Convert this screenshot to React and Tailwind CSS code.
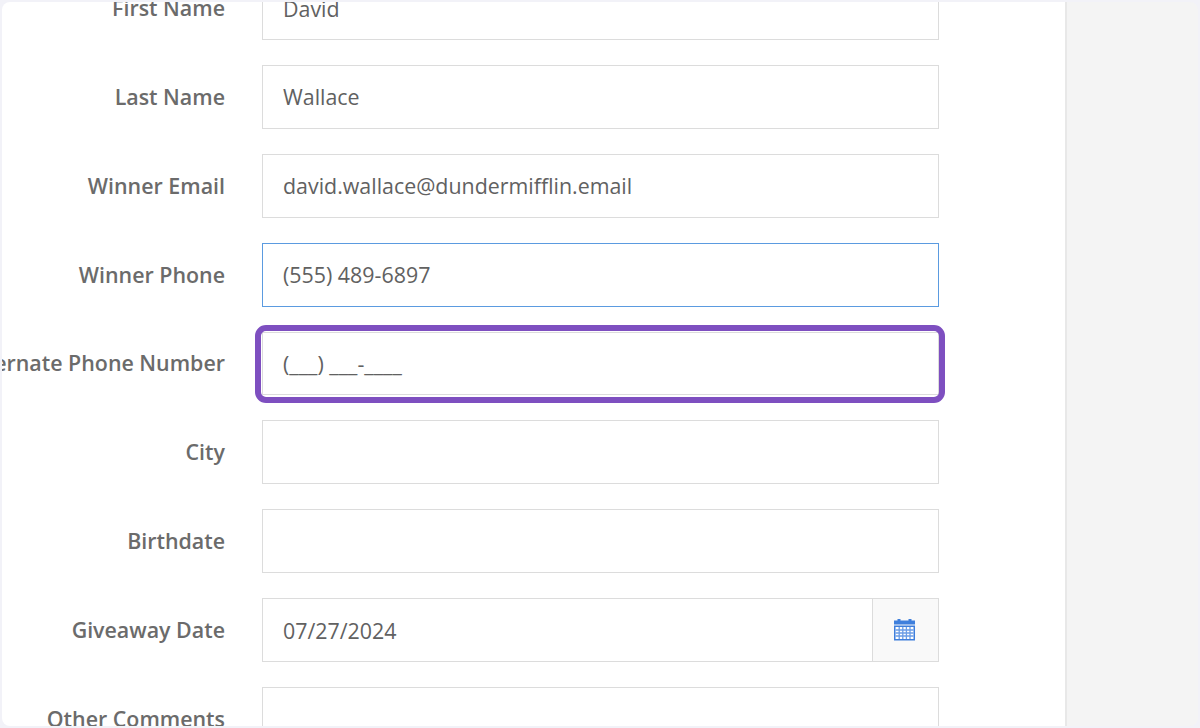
import React from 'react';

const CalendarIcon = () => (
    <svg width="21" height="22" viewBox="0 0 21 22" fill="none">
        <rect x="3.5" y="0" width="3" height="3" fill="#3f7fdc" />
        <rect x="14.5" y="0" width="3" height="3" fill="#3f7fdc" />
        <rect x="0" y="1.5" width="21" height="4" fill="#3f7fdc" />
        <rect x="0" y="6.5" width="21" height="15" fill="#3f7fdc" />
        <path d="M1.5 8h18v12h-18z" fill="#ffffff" />
        <path d="M5.2 8v12M8.8 8v12M12.4 8v12M16 8v12M1.5 11h18M1.5 14h18M1.5 17h18" stroke="#6b9de6" strokeWidth="1.3" />
    </svg>
);

const Row = ({ label, value = '', focused = false, highlighted = false, addon = false }) => (
    <div className="flex items-center h-[63.86px] shrink-0">
        <div className="w-[223px] shrink-0 flex justify-end">
            <span className="whitespace-nowrap text-[21.4px] font-semibold text-[#6b6b6b]">{label}</span>
        </div>
        <div className="relative flex ml-[37px] w-[677px] h-full">
            <input
                readOnly
                value={value}
                className={`block w-full h-full bg-white pl-[20px] pr-3 text-[21.4px] text-[#616161] outline-none border ${
                    focused ? 'border-[#5b9be0]' : 'border-[#dcdcdc]'
                } ${addon ? 'border-r-0' : ''}`}
            />
            {addon && (
                <div className="w-[67px] shrink-0 flex items-center justify-center pr-[2px] bg-[#f9f9f9] border border-[#dcdcdc]">
                    <CalendarIcon />
                </div>
            )}
            {highlighted && (
                <div className="absolute -left-[7px] -right-[6px] -top-[7px] -bottom-[8px] border-[6px] border-[#7e4fc0] rounded-[11px]" />
            )}
        </div>
    </div>
);

export default function App() {
    return (
        <div className="w-[1200px] h-[728px] overflow-hidden bg-[#f2f2f8] p-[2px] font-['Open_Sans',sans-serif]">
            <div className="flex h-full overflow-hidden rounded-[8px]">
                <main className="w-[1065px] h-full bg-white border-r-2 border-[#e8e8e8] overflow-hidden">
                    <div className="flex flex-col gap-[25px] -mt-[25.86px]">
                        <Row label="First Name" value="David" />
                        <Row label="Last Name" value="Wallace" />
                        <Row label="Winner Email" value="david.wallace@dundermifflin.email" />
                        <Row label="Winner Phone" value="(555) 489-6897" focused />
                        <Row label="Alternate Phone Number" value="(___) ___-____" highlighted />
                        <Row label="City" />
                        <Row label="Birthdate" />
                        <Row label="Giveaway Date" value="07/27/2024" addon />
                        <Row label="Other Comments" />
                    </div>
                </main>
                <aside className="flex-1 bg-[#f4f4f4]" />
            </div>
        </div>
    );
}
